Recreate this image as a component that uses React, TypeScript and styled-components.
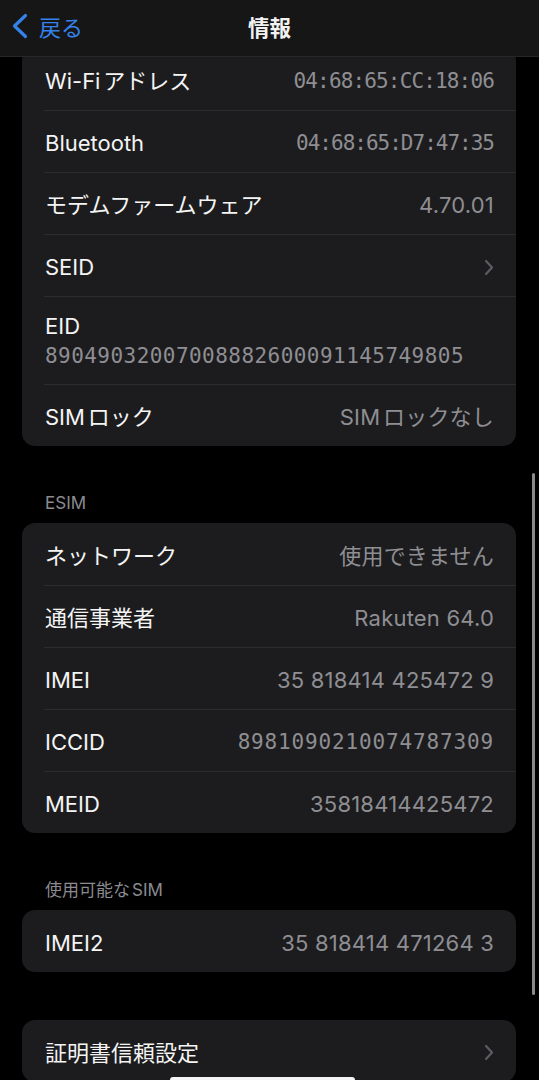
import styled, { createGlobalStyle } from 'styled-components';

const GlobalStyle = createGlobalStyle`
  html, body {
    margin: 0;
    padding: 0;
    background: #000;
  }
  body {
    font-family: 'Inter', 'Noto Sans CJK JP', sans-serif;
    -webkit-font-smoothing: antialiased;
    text-autospace: normal;
  }
`;

const Screen = styled.div`
  position: relative;
  width: 539px;
  height: 1080px;
  overflow: hidden;
  background: #000;
`;

const NavBar = styled.header`
  position: sticky;
  top: 0;
  z-index: 2;
  box-sizing: border-box;
  height: 57px;
  padding-bottom: 4px;
  background: #161616;
  border-bottom: 1px solid #272727;
  display: grid;
  grid-template-columns: 1fr auto 1fr;
  align-items: center;
`;

const BackButton = styled.div`
  display: flex;
  align-items: center;
  gap: 10px;
  padding-left: 11px;
  color: #3482ea;
  font-size: 22px;
  font-family: 'Noto Sans CJK JP', sans-serif;
`;

const NavTitle = styled.h1`
  margin: 0;
  color: #f2f2f2;
  font-size: 21.5px;
  font-weight: 700;
  font-family: 'Noto Sans CJK JP', sans-serif;
`;

const Content = styled.main`
  margin-top: -9px;
  padding: 0 23px 0 22px;
`;

const Card = styled.section<{ $gap?: number }>`
  background: #1c1c1e;
  border-radius: 13px;
  overflow: hidden;
  margin-top: ${(p) => p.$gap ?? 0}px;
`;

const SectionHeader = styled.div`
  margin-top: 47px;
  padding: 0 23px 10px;
  line-height: 20px;
  font-size: 17px;
  color: #8b8b90;
`;

const Row = styled.div<{ $tall?: boolean }>`
  box-sizing: border-box;
  height: ${(p) => (p.$tall ? 88 : 62)}px;
  margin-left: 22px;
  padding: ${(p) => (p.$tall ? '16px 22px 0 1px' : '3px 22px 0 1px')};
  display: flex;
  flex-direction: ${(p) => (p.$tall ? 'column' : 'row')};
  justify-content: ${(p) => (p.$tall ? 'flex-start' : 'space-between')};
  align-items: ${(p) => (p.$tall ? 'flex-start' : 'center')};
  & + & {
    border-top: 1px solid #2d2d2f;
  }
`;

const Label = styled.span`
  color: #f4f4f4;
  font-size: 22px;
  line-height: 26px;
  white-space: nowrap;
`;

const Value = styled.span<{ $mono?: boolean; $track?: number }>`
  color: #8e8e93;
  font-size: ${(p) => (p.$mono ? 21 : 22)}px;
  line-height: 28px;
  white-space: nowrap;
  font-family: ${(p) =>
    p.$mono ? "'DejaVu Sans Mono', monospace" : "'Inter', 'Noto Sans CJK JP', sans-serif"};
  letter-spacing: ${(p) => p.$track ?? 0.2}px;
`;

const SubValue = styled(Value)`
  margin-top: 3px;
`;

const ScrollIndicator = styled.div`
  position: absolute;
  left: 532px;
  top: 473px;
  width: 3px;
  height: 522px;
  border-radius: 2px;
  background: #8a8a8a;
`;

const HomeIndicator = styled.div`
  position: absolute;
  left: 170px;
  bottom: -3px;
  width: 185px;
  height: 6px;
  border-radius: 3px;
  background: #f5f5f5;
`;

const BackChevron = () => (
  <svg width="18" height="26" viewBox="0 0 18 26">
    <path
      d="M14.5 2.5 L3.5 13 L14.5 23.5"
      fill="none"
      stroke="#3482ea"
      strokeWidth="3.2"
      strokeLinecap="round"
      strokeLinejoin="round"
    />
  </svg>
);

const Chevron = () => (
  <svg width="10" height="17" viewBox="0 0 10 17">
    <path
      d="M2 2 L8 8.5 L2 15"
      fill="none"
      stroke="#5c5c60"
      strokeWidth="2.2"
      strokeLinecap="round"
      strokeLinejoin="round"
    />
  </svg>
);

const App = () => {
  return (
    <Screen>
      <GlobalStyle />
      <NavBar>
        <BackButton>
          <BackChevron />
          戻る
        </BackButton>
        <NavTitle>情報</NavTitle>
        <div />
      </NavBar>
      <Content>
        <Card>
          <Row>
            <Label>Wi-Fiアドレス</Label>
            <Value $mono $track={-0.85}>04:68:65:CC:18:06</Value>
          </Row>
          <Row>
            <Label>Bluetooth</Label>
            <Value $mono $track={-1}>04:68:65:D7:47:35</Value>
          </Row>
          <Row>
            <Label>モデムファームウェア</Label>
            <Value>4.70.01</Value>
          </Row>
          <Row>
            <Label>SEID</Label>
            <Chevron />
          </Row>
          <Row $tall>
            <Label>EID</Label>
            <SubValue $mono $track={0.45}>89049032007008882600091145749805</SubValue>
          </Row>
          <Row>
            <Label>SIMロック</Label>
            <Value>SIMロックなし</Value>
          </Row>
        </Card>

        <SectionHeader>ESIM</SectionHeader>
        <Card>
          <Row>
            <Label>ネットワーク</Label>
            <Value>使用できません</Value>
          </Row>
          <Row>
            <Label>通信事業者</Label>
            <Value>Rakuten 64.0</Value>
          </Row>
          <Row>
            <Label>IMEI</Label>
            <Value>35 818414 425472 9</Value>
          </Row>
          <Row>
            <Label>ICCID</Label>
            <Value $mono $track={0.85}>8981090210074787309</Value>
          </Row>
          <Row>
            <Label>MEID</Label>
            <Value>35818414425472</Value>
          </Row>
        </Card>

        <SectionHeader>使用可能なSIM</SectionHeader>
        <Card>
          <Row>
            <Label>IMEI2</Label>
            <Value>35 818414 471264 3</Value>
          </Row>
        </Card>

        <Card $gap={48}>
          <Row>
            <Label>証明書信頼設定</Label>
            <Chevron />
          </Row>
        </Card>
      </Content>
      <ScrollIndicator />
      <HomeIndicator />
    </Screen>
  );
};

export default App;
